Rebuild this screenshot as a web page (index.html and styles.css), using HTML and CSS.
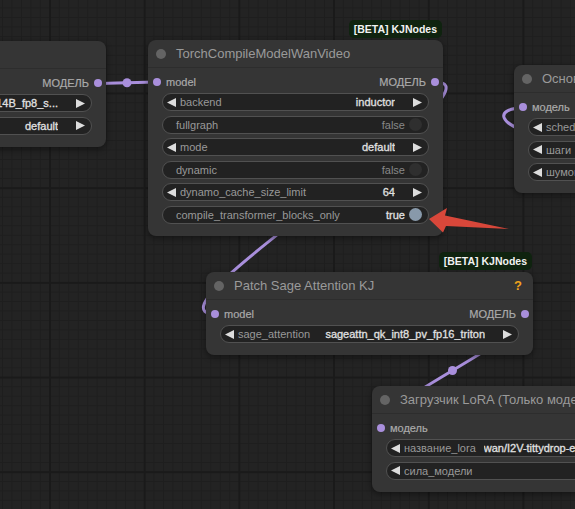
FILE: index.html
```html
<!DOCTYPE html>
<html lang="en">
<head>
    <meta charset="UTF-8">
    <title>ComfyUI graph</title>
    <link rel="stylesheet" href="styles.css">
</head>
<body>
    <div class="canvas">
        <!-- links sit under the nodes -->
        <svg class="links" width="575" height="509" viewBox="0 0 575 509">
            <path d="M97 83.5 C112 83.5, 142 82, 157 82"/>
            <circle cx="127" cy="82.7" r="4.5"/>
            <path d="M435 82 C515 82, 133 314, 215 314"/>
            <path d="M524 314 C569.6 314, 335.4 427, 381 427"/>
            <circle cx="452.5" cy="370.5" r="4.5"/>
            <path d="M540 135 C495 125, 495 108, 523 108"/>
        </svg>

        <!-- Load diffusion model (mostly off screen) -->
        <div class="node node-loader">
            <div class="node-title"><span class="title-dot"></span>Загрузить модель диффузии</div>
            <div class="slots">
                <span></span>
                <span class="slot out">МОДЕЛЬ<i class="dot"></i></span>
            </div>
            <div class="widgets">
                <div class="widget">
                    <span class="label plain">unet_name</span>
                    <span class="value">wan2.1_i2v_480p_14B_fp8_s...</span>
                    <svg class="arr-r" width="9" height="9" viewBox="0 0 9 9"><path d="M0 0 L9 4.5 L0 9Z"/></svg>
                </div>
                <div class="widget">
                    <span class="label plain">weight_dtype</span>
                    <span class="value">default</span>
                    <svg class="arr-r" width="9" height="9" viewBox="0 0 9 9"><path d="M0 0 L9 4.5 L0 9Z"/></svg>
                </div>
            </div>
        </div>

        <!-- TorchCompileModelWanVideo -->
        <div class="node node-compile">
            <div class="badge">[BETA] KJNodes</div>
            <div class="node-title"><span class="title-dot"></span>TorchCompileModelWanVideo</div>
            <div class="slots">
                <span class="slot in"><i class="dot"></i>model</span>
                <span class="slot out">МОДЕЛЬ<i class="dot"></i></span>
            </div>
            <div class="widgets">
                <div class="widget">
                    <svg class="arr-l" width="9" height="9" viewBox="0 0 9 9"><path d="M9 0 L0 4.5 L9 9Z"/></svg>
                    <span class="label">backend</span>
                    <span class="value">inductor</span>
                    <svg class="arr-r" width="9" height="9" viewBox="0 0 9 9"><path d="M0 0 L9 4.5 L0 9Z"/></svg>
                </div>
                <div class="widget">
                    <span class="label plain">fullgraph</span>
                    <span class="value off">false</span>
                    <span class="toggle"></span>
                </div>
                <div class="widget">
                    <svg class="arr-l" width="9" height="9" viewBox="0 0 9 9"><path d="M9 0 L0 4.5 L9 9Z"/></svg>
                    <span class="label">mode</span>
                    <span class="value">default</span>
                    <svg class="arr-r" width="9" height="9" viewBox="0 0 9 9"><path d="M0 0 L9 4.5 L0 9Z"/></svg>
                </div>
                <div class="widget">
                    <span class="label plain">dynamic</span>
                    <span class="value off">false</span>
                    <span class="toggle"></span>
                </div>
                <div class="widget">
                    <svg class="arr-l" width="9" height="9" viewBox="0 0 9 9"><path d="M9 0 L0 4.5 L9 9Z"/></svg>
                    <span class="label">dynamo_cache_size_limit</span>
                    <span class="value">64</span>
                    <svg class="arr-r" width="9" height="9" viewBox="0 0 9 9"><path d="M0 0 L9 4.5 L0 9Z"/></svg>
                </div>
                <div class="widget">
                    <span class="label plain">compile_transformer_blocks_only</span>
                    <span class="value">true</span>
                    <span class="toggle on"></span>
                </div>
            </div>
        </div>

        <!-- BasicScheduler (cut off on the right) -->
        <div class="node node-sched">
            <div class="node-title"><span class="title-dot"></span>Основной планировщик</div>
            <div class="slots">
                <span class="slot in"><i class="dot"></i>модель</span>
            </div>
            <div class="widgets">
                <div class="widget">
                    <svg class="arr-l" width="9" height="9" viewBox="0 0 9 9"><path d="M9 0 L0 4.5 L9 9Z"/></svg>
                    <span class="label">scheduler</span>
                    <span class="value">simple</span>
                </div>
                <div class="widget">
                    <svg class="arr-l" width="9" height="9" viewBox="0 0 9 9"><path d="M9 0 L0 4.5 L9 9Z"/></svg>
                    <span class="label">шаги</span>
                    <span class="value">20</span>
                </div>
                <div class="widget">
                    <svg class="arr-l" width="9" height="9" viewBox="0 0 9 9"><path d="M9 0 L0 4.5 L9 9Z"/></svg>
                    <span class="label">шумоподавление</span>
                    <span class="value">1.00</span>
                </div>
            </div>
        </div>

        <!-- Patch Sage Attention KJ -->
        <div class="node node-sage">
            <div class="badge">[BETA] KJNodes</div>
            <div class="node-title"><span class="title-dot"></span>Patch Sage Attention KJ<span class="help">?</span></div>
            <div class="slots">
                <span class="slot in"><i class="dot"></i>model</span>
                <span class="slot out">МОДЕЛЬ<i class="dot"></i></span>
            </div>
            <div class="widgets">
                <div class="widget">
                    <svg class="arr-l" width="9" height="9" viewBox="0 0 9 9"><path d="M9 0 L0 4.5 L9 9Z"/></svg>
                    <span class="label">sage_attention</span>
                    <span class="value">sageattn_qk_int8_pv_fp16_triton</span>
                    <svg class="arr-r" width="9" height="9" viewBox="0 0 9 9"><path d="M0 0 L9 4.5 L0 9Z"/></svg>
                </div>
            </div>
        </div>

        <!-- LoRA loader (cut off on the right) -->
        <div class="node node-lora">
            <div class="node-title"><span class="title-dot"></span>Загрузчик LoRA (Только модель)</div>
            <div class="slots">
                <span class="slot in"><i class="dot"></i>модель</span>
            </div>
            <div class="widgets">
                <div class="widget">
                    <svg class="arr-l" width="9" height="9" viewBox="0 0 9 9"><path d="M9 0 L0 4.5 L9 9Z"/></svg>
                    <span class="label">название_lora</span>
                    <span class="value">wan/I2V-tittydrop-epoch40.safetensors</span>
                </div>
                <div class="widget">
                    <svg class="arr-l" width="9" height="9" viewBox="0 0 9 9"><path d="M9 0 L0 4.5 L9 9Z"/></svg>
                    <span class="label">сила_модели</span>
                    <span class="value">1.00</span>
                </div>
            </div>
        </div>

        <!-- red pointer at the toggle -->
        <svg class="pointer" width="90" height="40" viewBox="420 200 90 40">
            <path d="M429 219 L447 208 L445 215.5 L509 229 L446 226 L443 232.5 Z"/>
        </svg>
    </div>
</body>
</html>
```

FILE: styles.css
```css
/* Page */
body {
    margin: 0;
    font-family: "Liberation Sans", Arial, sans-serif;
}

/* Graph canvas with its grid */
.canvas {
    position: relative;
    width: 575px;
    height: 509px;
    overflow: hidden;
    background-color: #232323;
    background-image:
        linear-gradient(to right, #1a1a1a 2px, transparent 2px),
        linear-gradient(to bottom, #1a1a1a 2px, transparent 2px),
        linear-gradient(to right, #1e1e1e 1px, transparent 1px),
        linear-gradient(to bottom, #1e1e1e 1px, transparent 1px);
    background-size: 94.7px 94.7px, 94.7px 94.7px, 9.47px 9.47px, 9.47px 9.47px;
    background-position: 49px 0, 0 92.5px, 2px 0, 0 7.5px;
}

/* Links */
.links {
    position: absolute;
    left: 0;
    top: 0;
}

.links path {
    fill: none;
    stroke: #a98fdc;
    stroke-width: 3;
}

.links circle {
    fill: #a98fdc;
}

/* Nodes */
.node {
    position: absolute;
    background: #353535;
    border-radius: 8px;
    box-shadow: 0 2px 6px rgba(0, 0, 0, 0.45);
    color: #999;
    font-size: 11px;
}

.node-loader { left: -260px; top: 41px; width: 366px; }
.node-compile { left: 148px; top: 40px; width: 295px; }
.node-sched { left: 514px; top: 65px; width: 300px; }
.node-sage { left: 206px; top: 272px; width: 327px; }
.node-lora { left: 372px; top: 386px; width: 330px; }

.node-title {
    display: flex;
    align-items: center;
    height: 27px;
    border-bottom: 1px solid #2d2d2d;
    font-size: 13px;
    color: #9a9a9a;
    white-space: nowrap;
}

.title-dot {
    width: 10px;
    height: 10px;
    border-radius: 50%;
    background: #646464;
    margin: 0 10px 0 8px;
    flex-shrink: 0;
}

.help {
    margin-left: auto;
    margin-right: 11px;
    color: #f0a21c;
    font-weight: bold;
    font-size: 13px;
}

.badge {
    position: absolute;
    right: 1px;
    top: -20px;
    height: 18px;
    padding: 0 5px;
    display: flex;
    align-items: center;
    background: #0f230f;
    border-radius: 5px;
    color: #f2f2f2;
    font-size: 10.5px;
    font-weight: bold;
    white-space: nowrap;
}

/* Input / output slots */
.slots {
    display: flex;
    justify-content: space-between;
    align-items: center;
    height: 20px;
    margin-top: 4px;
}

.slot {
    display: flex;
    align-items: center;
    color: #aaa;
    white-space: nowrap;
    -webkit-text-stroke: 0.2px #aaa;
}

.dot {
    width: 8px;
    height: 8px;
    border-radius: 50%;
    background: #a98fdc;
}

.slot.in .dot { margin: 0 5px 0 5px; }
.slot.out .dot { margin: 0 4px 0 5px; }

/* Widgets */
.widgets {
    display: flex;
    flex-direction: column;
    gap: 4.5px;
    padding: 1px 14px 12px;
}

.widget {
    display: flex;
    align-items: center;
    height: 18px;
    box-sizing: border-box;
    background: #222;
    border: 1px solid #515151;
    border-radius: 9px;
    white-space: nowrap;
    overflow: hidden;
}

.arr-l {
    fill: #ddd;
    margin-left: 4px;
    flex-shrink: 0;
}

.arr-r {
    fill: #ddd;
    margin-right: 6px;
    flex-shrink: 0;
}

.label {
    color: #999;
    margin-left: 4px;
    flex-shrink: 0;
}

.label.plain {
    margin-left: 13px;
}

.value {
    flex: 1;
    min-width: 0;
    margin: 0 18px 0 8px;
    text-align: right;
    color: #e0e0e0;
    -webkit-text-stroke: 0.3px #e0e0e0;
    overflow: hidden;
    text-overflow: clip;
}

.value.off {
    color: #888;
    -webkit-text-stroke: 0;
}

.value:has(+ .toggle) {
    margin-right: 4px;
}

.toggle {
    width: 13px;
    height: 13px;
    border-radius: 50%;
    background: #2f2f2f;
    margin-right: 6px;
    flex-shrink: 0;
}

.toggle.on {
    background: #8899aa;
}

/* Red arrow overlay */
.pointer {
    position: absolute;
    left: 420px;
    top: 200px;
}

.pointer path {
    fill: #d8473a;
}
```
